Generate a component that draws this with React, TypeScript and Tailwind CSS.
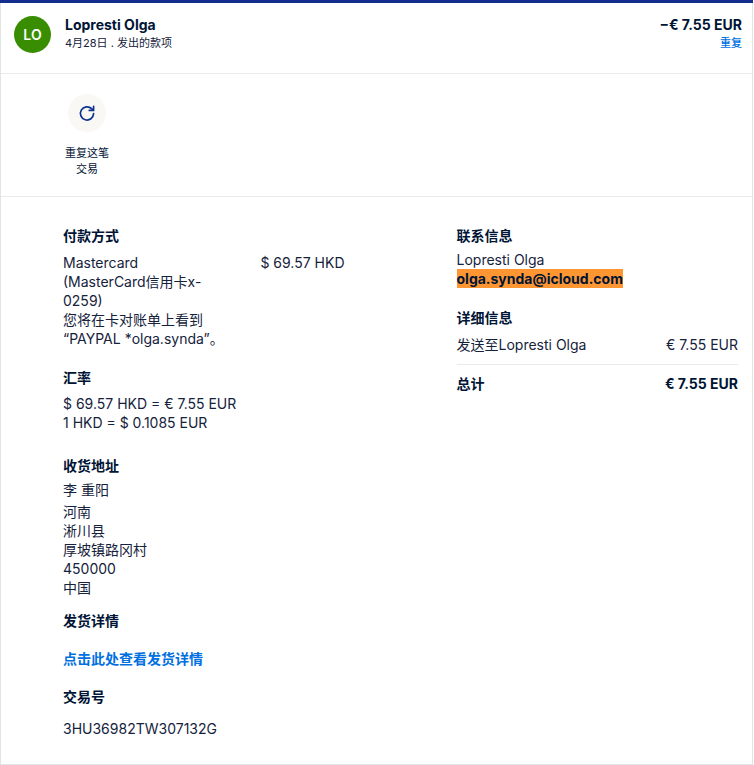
import type { ReactNode } from "react";

const address = ["河南", "淅川县", "厚坡镇路冈村", "450000", "中国"];

function Heading({ children }: { children: ReactNode }) {
  return <h2 className="font-bold text-[#001435]">{children}</h2>;
}

function RepeatIcon() {
  return (
    <svg width="18" height="18" viewBox="0 0 18 18" fill="none" aria-hidden="true">
      <path
        d="M15.6 9.6A6.6 6.6 0 1 1 13.6 4.7L15.1 6"
        stroke="#0b3490"
        strokeWidth="1.7"
        strokeLinecap="round"
      />
      <path
        d="M15.6 2.3V6.4H11.3"
        stroke="#0b3490"
        strokeWidth="1.7"
        strokeLinecap="round"
        strokeLinejoin="round"
      />
    </svg>
  );
}

function Header() {
  return (
    <header className="flex items-start border-b border-[#eaebed] pt-[13px] pr-[10px] pb-5 pl-[13px]">
      <div className="flex size-[37px] shrink-0 items-center justify-center rounded-full bg-[#388e00] font-semibold text-white">
        LO
      </div>
      <div className="ml-[14px] flex-1">
        <h1 className="leading-[18px] font-bold text-[#001435]">Lopresti Olga</h1>
        <p className="text-[11px] leading-[18px]">4月28日 . 发出的款项</p>
      </div>
      <div className="text-right">
        <p className="leading-[18px] font-bold text-[#001435]">−€ 7.55 EUR</p>
        <a href="#repeat" className="block text-[11px] leading-[18px] font-medium text-[#0070e0]">
          重复
        </a>
      </div>
    </header>
  );
}

function Actions() {
  return (
    <div className="border-b border-[#eaebed] pt-5 pb-[19px] pl-[62px]">
      <button
        type="button"
        className="flex w-12 cursor-pointer flex-col items-center gap-[13px] text-[11px] leading-4"
      >
        <span className="flex size-[38px] items-center justify-center rounded-full bg-[#faf8f5]">
          <RepeatIcon />
        </span>
        <span className="text-center text-[#001435]">重复这笔交易</span>
      </button>
    </div>
  );
}

function Payment() {
  return (
    <section>
      <Heading>付款方式</Heading>
      <div className="mt-2 flex justify-between whitespace-nowrap">
        <p>
          Mastercard
          <br />
          (MasterCard信用卡x-
          <br />
          0259)
          <br />
          您将在卡对账单上看到
          <br />
          “PAYPAL *olga.synda”。
        </p>
        <p>$ 69.57 HKD</p>
      </div>

      <div className="mt-5">
        <Heading>汇率</Heading>
        <p className="mt-[7px]">$ 69.57 HKD = € 7.55 EUR</p>
        <p>1 HKD = $ 0.1085 EUR</p>
      </div>

      <div className="mt-6">
        <Heading>收货地址</Heading>
        <p className="mt-[5px] mb-[3px]">李 重阳</p>
        {address.map((line) => (
          <p key={line}>{line}</p>
        ))}
      </div>

      <div className="mt-[14px]">
        <Heading>发货详情</Heading>
        <a href="#shipping" className="mt-[19px] block font-semibold text-[#0070e0]">
          点击此处查看发货详情
        </a>
      </div>

      <div className="mt-[19px]">
        <Heading>交易号</Heading>
        <p className="mt-[13px]">3HU36982TW307132G</p>
      </div>
    </section>
  );
}

function Details() {
  return (
    <section>
      <Heading>联系信息</Heading>
      <p className="mt-[5px]">Lopresti Olga</p>
      <p className="flex">
        <mark className="bg-[#ff9632] font-bold text-[#001435]">olga.synda@icloud.com</mark>
      </p>

      <div className="mt-5">
        <Heading>详细信息</Heading>
        <dl className="mt-2">
          <div className="flex justify-between border-b border-[#eaebed] pb-[10px]">
            <dt>发送至Lopresti Olga</dt>
            <dd>€ 7.55 EUR</dd>
          </div>
          <div className="flex justify-between pt-[9px] font-bold text-[#001435]">
            <dt>总计</dt>
            <dd>€ 7.55 EUR</dd>
          </div>
        </dl>
      </div>
    </section>
  );
}

export default function App() {
  return (
    <div className="bg-white pr-px">
      <main className="border-x border-b border-[#e1e3e6] font-['Inter','Noto_Sans_CJK_SC',sans-serif] text-[14px] leading-[19px] text-[#15223c]">
        <div className="-mx-px h-[3px] bg-[#142c8e]" />
        <Header />
        <Actions />
        <div className="grid grid-cols-2 gap-28 pt-[29px] pr-[14px] pb-[26px] pl-[62px]">
          <Payment />
          <Details />
        </div>
      </main>
    </div>
  );
}
